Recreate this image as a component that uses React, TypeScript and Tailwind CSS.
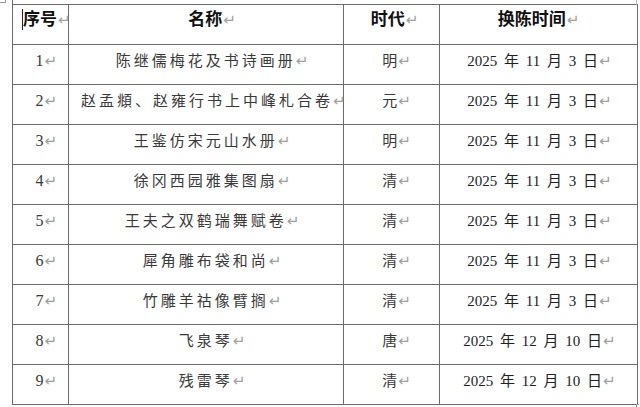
import React from "react";

const rows = [
  { no: "1", name: "陈继儒梅花及书诗画册", era: "明", date: "2025 年 11 月 3 日" },
  { no: "2", name: "赵孟頫、赵雍行书上中峰札合卷", era: "元", date: "2025 年 11 月 3 日" },
  { no: "3", name: "王鉴仿宋元山水册", era: "明", date: "2025 年 11 月 3 日" },
  { no: "4", name: "徐冈西园雅集图扇", era: "清", date: "2025 年 11 月 3 日" },
  { no: "5", name: "王夫之双鹤瑞舞赋卷", era: "清", date: "2025 年 11 月 3 日" },
  { no: "6", name: "犀角雕布袋和尚", era: "清", date: "2025 年 11 月 3 日" },
  { no: "7", name: "竹雕羊祜像臂搁", era: "清", date: "2025 年 11 月 3 日" },
  { no: "8", name: "飞泉琴", era: "唐", date: "2025 年 12 月 10 日" },
  { no: "9", name: "残雷琴", era: "清", date: "2025 年 12 月 10 日" },
];

// Word 的段落标记
const Mark = ({ tight = false }: { tight?: boolean }) => (
  <span
    className={`${tight ? "ml-0" : "ml-[1px]"} text-[15px] font-normal tracking-normal text-[#a0a0a0] [font-family:'DejaVu_Sans',sans-serif]`}
  >
    ↵
  </span>
);

const font = "[font-family:'Liberation_Serif','Noto_Sans_CJK_SC',serif]";
const cell = "border border-[#6b6b6b] align-top h-[40px] p-0 whitespace-nowrap";

export default function App() {
  return (
    <div className={`relative h-[407px] w-[640px] overflow-hidden bg-white ${font}`}>
      {/* 表格移动手柄与边角标记 */}
      <div className="absolute left-0 top-0 h-[3px] w-[6px] border-b border-r border-[#9a9a9a]" />
      <div className="absolute left-[12px] top-0 h-[5px] w-px bg-[#6b6b6b]" />
      <div className="absolute right-[3px] top-0 h-[5px] w-px bg-[#bdbdbd]" />
      <div className="absolute bottom-0 right-[1px] h-[3px] w-[3px] border-l border-t border-[#9a9a9a]" />

      <div className="pl-[12px] pt-[4px]">
        <table className="w-[625px] table-fixed border-collapse">
          <colgroup>
            <col className="w-[56px]" />
            <col className="w-[275px]" />
            <col className="w-[96px]" />
            <col className="w-[198px]" />
          </colgroup>
          <thead>
            <tr className="text-[17px] font-bold text-[#111]">
              <th className={`${cell} text-left`}>
                <div className="relative pl-[10px] pt-[4px] leading-[22px]">
                  <span className="absolute left-[9px] top-[4px] h-[21px] w-px bg-[#222]" />
                  序号
                  <Mark />
                </div>
              </th>
              <th className={`${cell} text-center`}>
                <div className="pl-[12px] pt-[4px] leading-[22px]">
                  名称
                  <Mark />
                </div>
              </th>
              <th className={`${cell} text-center`}>
                <div className="pl-[6px] pt-[4px] leading-[22px]">
                  时代
                  <Mark />
                </div>
              </th>
              <th className={`${cell} text-center`}>
                <div className="pt-[4px] leading-[22px]">
                  换陈时间
                  <Mark />
                </div>
              </th>
            </tr>
          </thead>
          <tbody className="text-[15px] text-[#3a3a3a]">
            {rows.map((r) => (
              <tr key={r.no}>
                <td className={`${cell} text-right`}>
                  <div className="pr-[11px] pt-[6px] text-[16px] leading-[20px]">
                    {r.no}
                    <Mark />
                  </div>
                </td>
                <td className={`${cell} text-center`}>
                  <div className="pl-[12px] pt-[6px] leading-[20px] tracking-[3px]">
                    {r.name}
                    <Mark tight />
                  </div>
                </td>
                <td className={`${cell} text-center`}>
                  <div className="pl-[10px] pt-[6px] leading-[20px]">
                    {r.era}
                    <Mark />
                  </div>
                </td>
                <td className={`${cell} text-center`}>
                  <div className="pl-[2px] pt-[6px] leading-[20px] text-[#222] [word-spacing:3px]">
                    {r.date}
                    <Mark />
                  </div>
                </td>
              </tr>
            ))}
          </tbody>
        </table>
      </div>
    </div>
  );
}
